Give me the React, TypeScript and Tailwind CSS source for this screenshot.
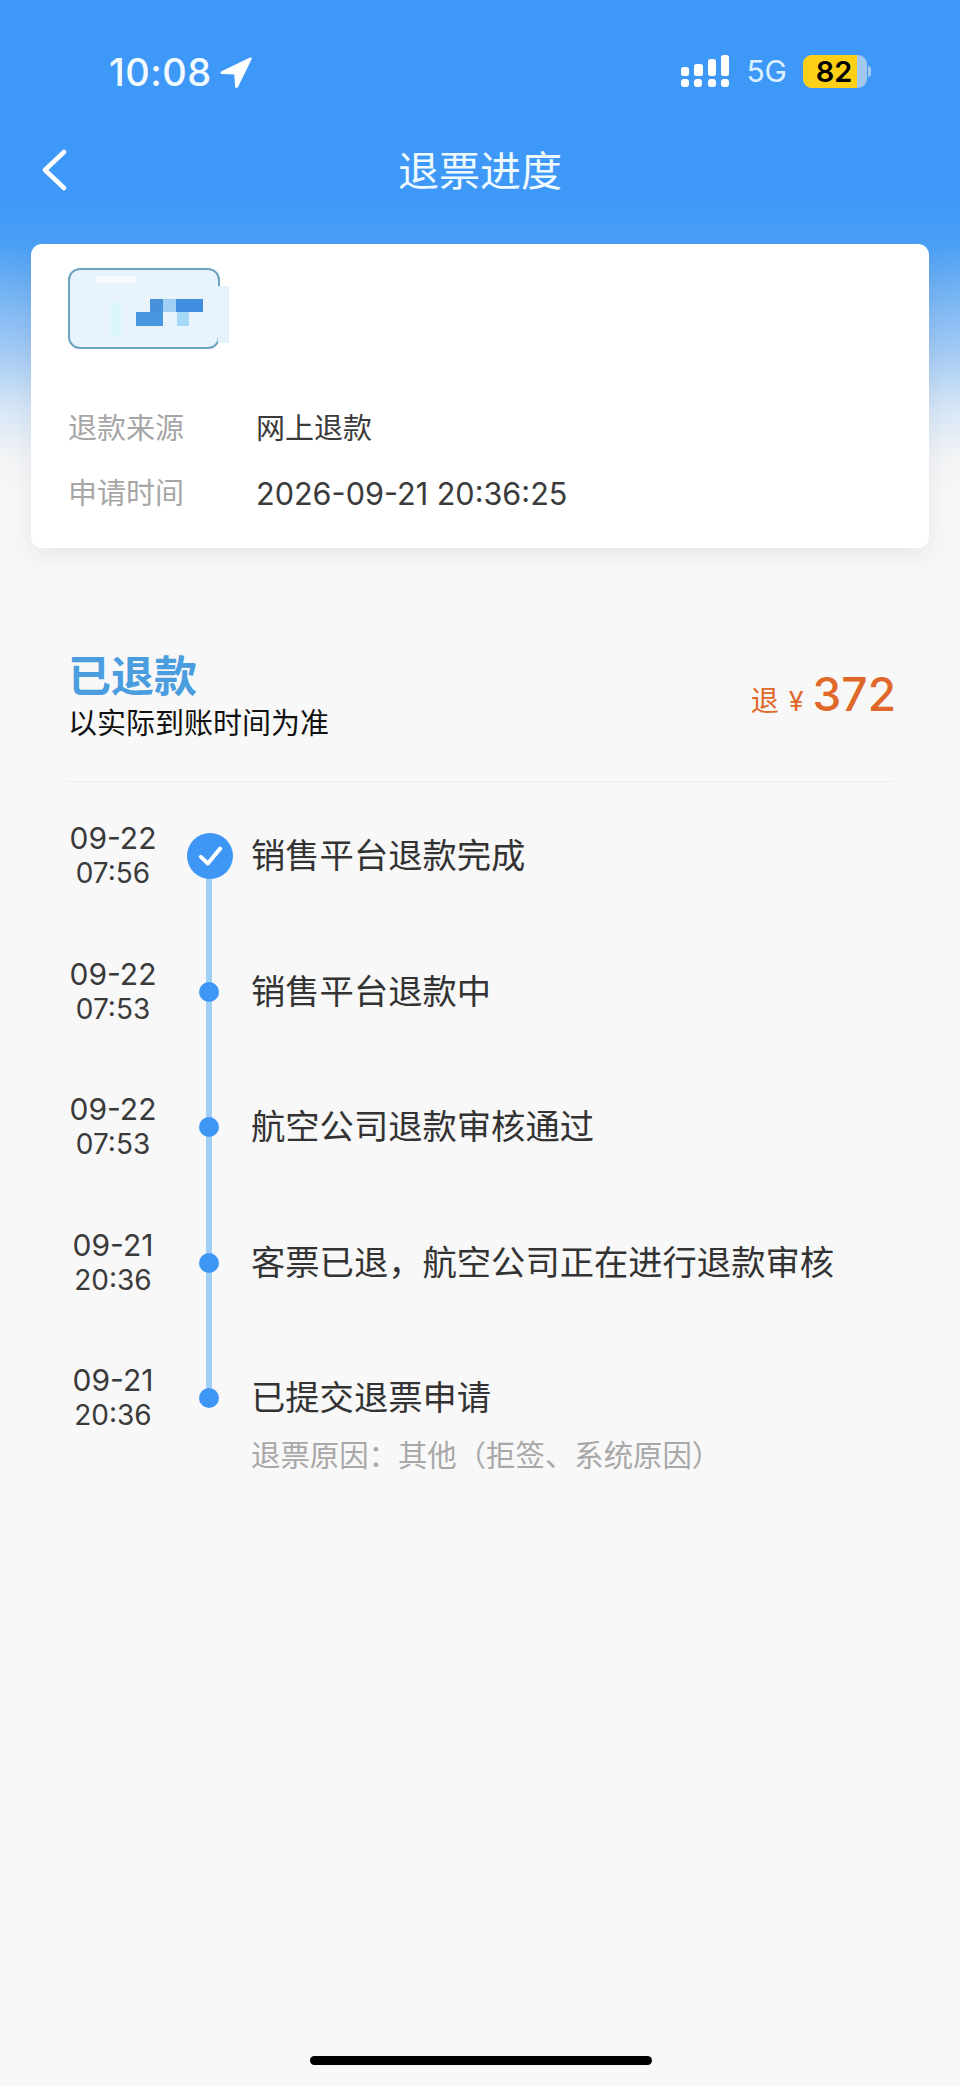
const FONT = "font-['Inter','Noto_Sans_CJK_SC',sans-serif]";

const steps = [
  { d: "09-22", t: "07:56", label: "销售平台退款完成", done: true },
  { d: "09-22", t: "07:53", label: "销售平台退款中" },
  { d: "09-22", t: "07:53", label: "航空公司退款审核通过" },
  { d: "09-21", t: "20:36", label: "客票已退，航空公司正在进行退款审核" },
  { d: "09-21", t: "20:36", label: "已提交退票申请", sub: "退票原因：其他（拒签、系统原因）", last: true },
];

function Signal() {
  return (
    <svg width="48" height="32" viewBox="0 0 48 32" fill="#ffffff">
      <rect x="0" y="12" width="8" height="9" rx="2.5" />
      <rect x="13" y="9" width="9" height="12" rx="2.5" />
      <rect x="27" y="4" width="8" height="17" rx="2.5" />
      <rect x="40" y="0" width="8" height="21" rx="2.5" />
      <rect x="0" y="24" width="8" height="8" rx="3" />
      <rect x="13" y="24" width="8" height="8" rx="3" />
      <rect x="27" y="24" width="8" height="8" rx="3" />
      <rect x="40" y="24" width="8" height="8" rx="3" />
    </svg>
  );
}

function Battery() {
  return (
    <div className="flex items-center">
      <div className="w-[64px] h-[33px] rounded-[9px] bg-[#a3c8ee] overflow-hidden">
        <div className="w-[54px] h-full bg-[#fdd017] flex items-center justify-center text-[29px] font-semibold text-black leading-none pl-[8px]">
          82
        </div>
      </div>
      <div className="w-[3px] h-[11px] ml-[1px] rounded-r-full bg-[#a3c8ee]" />
    </div>
  );
}

function Badge() {
  return (
    <svg width="164" height="84" viewBox="0 0 164 84">
      <defs>
        <filter id="soft" x="-10%" y="-10%" width="120%" height="120%">
          <feGaussianBlur stdDeviation="0.6" />
        </filter>
      </defs>
      <rect x="1" y="1" width="150" height="79" rx="11" fill="#e9f3fc" stroke="#6ba3c4" strokeWidth="2" />
      <rect x="150" y="18" width="11" height="57" fill="#e6f2fb" filter="url(#soft)" />
      <rect x="28" y="8" width="40" height="7" rx="3" fill="#f7fbff" filter="url(#soft)" />
      <rect x="43" y="35" width="10" height="33" fill="#d9f5fb" filter="url(#soft)" />
      <g filter="url(#soft)">
        <rect x="82" y="31" width="13" height="13" fill="#4a90dc" />
        <rect x="95" y="31" width="13" height="13" fill="#9fcff5" />
        <rect x="108" y="31" width="27" height="13" fill="#3f8ce0" />
        <rect x="68" y="44" width="27" height="14" fill="#4a96e0" />
        <rect x="109" y="44" width="12" height="14" fill="#a5d8f7" />
      </g>
    </svg>
  );
}

export default function App() {
  return (
    <div className={`${FONT} relative w-[960px] h-[2086px] overflow-hidden bg-[linear-gradient(to_bottom,#3e98f8_0,#3e98f8_195px,#4a9ff7_243px,#72b2f4_290px,#a8cdf4_357px,#d5e5f6_407px,#f2f4f6_457px,#f8f8f8_500px)]`}>
      {/* status bar */}
      <div className="h-[140px] pt-[52px] pl-[109px] pr-[89px] flex items-start justify-between text-white">
        <div className="flex items-center h-[40px]">
          <span className="text-[38px] tracking-[0.5px] font-medium leading-none text-[#f4fbff]">10:08</span>
          <svg className="ml-[8px]" width="32" height="31" viewBox="0 0 32 31" fill="#ffffff">
            <path d="M30 .6 1.5 14.2c-1.6.8-1.1 2.8.6 2.8l12.2.4.7 11.9c.1 1.8 2.3 2.2 3 .6L31.6 2.2C32 1 31.2.1 30 .6Z" />
          </svg>
        </div>
        <div className="flex items-center h-[40px] mt-[-1px]">
          <Signal />
          <span className="ml-[17px] mr-[16px] text-[30px] leading-none text-[#dcf1ff]">5G</span>
          <Battery />
        </div>
      </div>

      {/* nav bar */}
      <div className="relative h-[60px] flex items-center justify-center">
        <svg className="absolute left-[40px] top-[9px]" width="28" height="42" viewBox="0 0 28 42" fill="none" stroke="#ffffff" strokeWidth="4.5" strokeLinecap="round" strokeLinejoin="round">
          <path d="M24 3 5 21l19 18" />
        </svg>
        <h1 className="text-[41px] leading-none font-normal text-[#eefaff] mt-[2px]">退票进度</h1>
      </div>

      {/* card */}
      <div className="mt-[44px] mx-[31px] h-[304px] rounded-[11px] bg-white shadow-[0_8px_24px_rgba(60,70,90,0.09)] pl-[37px] pt-[24px]">
        <Badge />
        <div className="mt-[62px] flex flex-col gap-[35px] text-[29px] leading-[30px]">
          <div className="flex">
            <span className="w-[188px] text-[#a6a6a6]">退款来源</span>
            <span className="text-[#3b3b3b]">网上退款</span>
          </div>
          <div className="flex">
            <span className="w-[188px] text-[#a6a6a6]">申请时间</span>
            <span className="text-[#3b3b3b] text-[30.6px]">2026-09-21 20:36:25</span>
          </div>
        </div>
      </div>

      {/* refund summary */}
      <div className="mt-[101px] mx-[68px] h-[133px] border-b border-[#ececec] flex justify-between items-start">
        <div>
          <div className="text-[43px] leading-[54px] font-bold text-[#4a9ddf]">已退款</div>
          <div className="mt-[1px] text-[29px] leading-[40px] text-[#111111]">以实际到账时间为准</div>
        </div>
        <div className="flex items-baseline mt-[22px] text-[#e0682a] mr-[-4px]">
          <span className="text-[28px] leading-none">退</span>
          <span className="ml-[10px] text-[27px] leading-none">¥</span>
          <span className="ml-[9px] text-[46px] leading-none font-medium">372</span>
        </div>
      </div>

      {/* timeline */}
      <div className="mt-[7px] ml-[68px]">
        {steps.map((s, i) => (
          <div key={i} className="relative flex h-[135.5px]">
            <div className="w-[90px] pt-[32px] flex flex-col items-center text-[#3a3a3a]">
              <span className="text-[30px] leading-[34px]">{s.d}</span>
              <span className="text-[28px] leading-[34px] mt-[1px]">{s.t}</span>
            </div>
            <div className="relative w-[93px] flex justify-center">
              {!s.last && <div className="absolute left-[48px] top-[60px] w-[6px] h-[135.5px] bg-[#a1d0f6]" />}
              {s.done ? (
                <div className="absolute left-[29px] top-[44px] w-[46px] h-[46px] rounded-full bg-[#3f97f5] flex items-center justify-center">
                  <svg width="25" height="21" viewBox="0 0 28 24" fill="none" stroke="#ffffff" strokeWidth="4.5" strokeLinecap="round" strokeLinejoin="round">
                    <path d="M3 12.5 11 20 25 3" />
                  </svg>
                </div>
              ) : (
                <div className="absolute left-[41px] top-[57px] w-[20px] h-[20px] rounded-full bg-[#3f97f5]" />
              )}
            </div>
            <div className="pt-[47px]">
              <div className="text-[34.3px] leading-[40px] text-[#333333] whitespace-nowrap">{s.label}</div>
              {s.sub && <div className="mt-[20px] text-[29.4px] leading-[36px] text-[#a8a8a8] whitespace-nowrap">{s.sub}</div>}
            </div>
          </div>
        ))}
      </div>

      {/* home indicator */}
      <div className="absolute left-[310px] bottom-[21px] w-[342px] h-[9px] rounded-full bg-black" />
    </div>
  );
}
